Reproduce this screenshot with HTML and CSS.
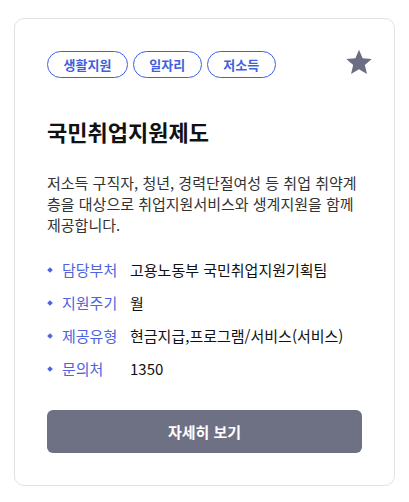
FILE: index.html
```html
<!DOCTYPE html>
<html lang="ko">
<head>
<meta charset="utf-8">
<link rel="stylesheet" href="styles.css">
</head>
<body>
<div class="card">
  <div class="top">
    <div class="tags">
      <span class="tag">생활지원</span>
      <span class="tag">일자리</span>
      <span class="tag">저소득</span>
    </div>
    <svg class="star" width="28" height="28" viewBox="0 0 24 24"><path d="M12 1.6l3.1 7.2 7.8.7-5.9 5.1 1.8 7.7L12 18.2l-6.8 4.1 1.8-7.7-5.9-5.1 7.8-.7z" fill="#6b6e82"/></svg>
  </div>
  <h1 class="title">국민취업지원제도</h1>
  <p class="desc">저소득 구직자, 청년, 경력단절여성 등 취업 취약계층을 대상으로 취업지원서비스와 생계지원을 함께 제공합니다.</p>
  <ul class="info">
    <li><span class="label">담당부처</span><span class="value">고용노동부 국민취업지원기획팀</span></li>
    <li><span class="label">지원주기</span><span class="value">월</span></li>
    <li><span class="label">제공유형</span><span class="value">현금지급,프로그램/서비스(서비스)</span></li>
    <li><span class="label">문의처</span><span class="value">1350</span></li>
  </ul>
  <button class="btn">자세히 보기</button>
</div>
</body>
</html>
```
FILE: styles.css
```css
* { box-sizing: border-box; }
html, body { margin: 0; padding: 0; background: #fff; }
body {
  font-family: "Noto Sans CJK KR", "Noto Sans", sans-serif;
  color: #111;
  padding: 18px 14px 16px 14px;
}
.card {
  width: 381px;
  border: 1px solid #e2e2e6;
  border-radius: 10px;
  padding: 32px;
}
.top {
  display: flex;
  justify-content: space-between;
  align-items: flex-start;
  height: 28px;
}
.tags { display: flex; gap: 5px; }
.tag {
  display: inline-flex;
  align-items: center;
  height: 27px;
  padding: 0 15.5px;
  border: 1px solid #3f5fe0;
  border-radius: 14px;
  color: #3f5fe0;
  font-size: 13px;
  font-weight: 600;
  line-height: 1;
}
.star { margin-top: -3px; margin-right: -11px; }
.title {
  margin: 37px 0 0 0;
  font-size: 22px;
  font-weight: 700;
  line-height: 30px;
  color: #111;
}
.desc {
  margin: 26px 0 0 0;
  font-size: 15px;
  line-height: 21px;
  color: #333;
}
.info {
  list-style: none;
  margin: 24px 0 0 0;
  padding: 0;
  display: flex;
  flex-direction: column;
  gap: 11px;
}
.info li {
  display: flex;
  align-items: center;
  font-size: 15px;
  line-height: 22px;
}
.label {
  position: relative;
  width: 83px;
  flex-shrink: 0;
  padding-left: 15px;
  color: #4d63e0;
}
.label::before {
  content: "";
  position: absolute;
  left: 1px;
  top: 9px;
  width: 4px;
  height: 4px;
  background: #4d63e0;
  transform: rotate(45deg);
}
.value { color: #111; }
.btn {
  display: block;
  width: 100%;
  height: 43px;
  margin-top: 30px;
  border: none;
  border-radius: 6px;
  background: #6e7084;
  color: #fff;
  font-family: inherit;
  font-size: 15px;
  font-weight: 700;
}
```
